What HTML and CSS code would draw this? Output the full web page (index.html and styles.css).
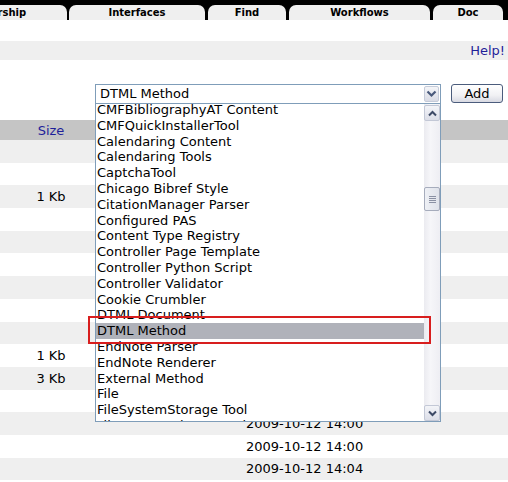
FILE: index.html
```html
<!DOCTYPE html>
<html>
<head>
<meta charset="utf-8">
<link rel="stylesheet" href="styles.css">
</head>
<body>
<div class="tabs">
  <div class="tab tab-own">Ownership</div>
  <div class="tab tab-int">Interfaces</div>
  <div class="tab tab-find">Find</div>
  <div class="tab tab-wf">Workflows</div>
  <div class="tab tab-doc">Doc</div>
</div>
<div class="helpbar"><a class="help" href="#">Help!</a></div>
<div class="addrow">
  <div class="select-wrap">
    <div class="select">
      <span class="select-value">DTML Method</span>
      <span class="select-btn"><svg width="11" height="8" viewBox="0 0 11 8"><polyline points="1.5,1.5 5.5,5.5 9.5,1.5" fill="none" stroke="#4a5a7c" stroke-width="2.2"/></svg></span>
    </div>
    <div class="dropdown">
      <div class="options">
        <div class="opt">CMFBibliographyAT Content</div>
        <div class="opt">CMFQuickInstallerTool</div>
        <div class="opt">Calendaring Content</div>
        <div class="opt">Calendaring Tools</div>
        <div class="opt">CaptchaTool</div>
        <div class="opt">Chicago Bibref Style</div>
        <div class="opt">CitationManager Parser</div>
        <div class="opt">Configured PAS</div>
        <div class="opt">Content Type Registry</div>
        <div class="opt">Controller Page Template</div>
        <div class="opt">Controller Python Script</div>
        <div class="opt">Controller Validator</div>
        <div class="opt">Cookie Crumbler</div>
        <div class="opt">DTML Document</div>
        <div class="opt opt-sel">DTML Method</div>
        <div class="opt">EndNote Parser</div>
        <div class="opt">EndNote Renderer</div>
        <div class="opt">External Method</div>
        <div class="opt">File</div>
        <div class="opt">FileSystemStorage Tool</div>
        <div class="opt">Filesystem Directory View</div>
      </div>
      <div class="scrollbar">
        <div class="sb-btn"><svg width="9" height="7" viewBox="0 0 9 7"><polyline points="1,5.5 4.5,2 8,5.5" fill="none" stroke="#3d4a66" stroke-width="2"/></svg></div>
        <div class="sb-track"><div class="sb-thumb"><span></span><span></span><span></span><span></span></div></div>
        <div class="sb-btn"><svg width="9" height="7" viewBox="0 0 9 7"><polyline points="1,1.5 4.5,5 8,1.5" fill="none" stroke="#3d4a66" stroke-width="2"/></svg></div>
      </div>
    </div>
  </div>
  <button class="add-btn">Add</button>
</div>
<div class="listing">
  <div class="row head"><span class="c-size">Size</span><span class="c-date"></span></div>
  <div class="row alt"><span class="c-size"></span><span class="c-date"></span></div>
  <div class="row"><span class="c-size"></span><span class="c-date"></span></div>
  <div class="row alt"><span class="c-size">1 Kb</span><span class="c-date"></span></div>
  <div class="row"><span class="c-size"></span><span class="c-date"></span></div>
  <div class="row alt"><span class="c-size"></span><span class="c-date"></span></div>
  <div class="row"><span class="c-size"></span><span class="c-date"></span></div>
  <div class="row alt"><span class="c-size"></span><span class="c-date"></span></div>
  <div class="row"><span class="c-size"></span><span class="c-date"></span></div>
  <div class="row alt"><span class="c-size"></span><span class="c-date"></span></div>
  <div class="row"><span class="c-size">1 Kb</span><span class="c-date"></span></div>
  <div class="row alt"><span class="c-size">3 Kb</span><span class="c-date"></span></div>
  <div class="row"><span class="c-size"></span><span class="c-date"></span></div>
  <div class="row alt"><span class="c-size"></span><span class="c-date">2009-10-12 14:00</span></div>
  <div class="row"><span class="c-size"></span><span class="c-date">2009-10-12 14:00</span></div>
  <div class="row alt"><span class="c-size"></span><span class="c-date">2009-10-12 14:04</span></div>
  <div class="row"><span class="c-size"></span><span class="c-date"></span></div>
</div>
<div class="callout"></div>
</body>
</html>
```
FILE: styles.css
```css
html, body {
  margin: 0;
  padding: 0;
  background: #fff;
  width: 508px;
  height: 482px;
  overflow: hidden;
}
body {
  font-family: "DejaVu Sans", Verdana, sans-serif;
  font-size: 13px;
  color: #000;
  position: relative;
}
.tabs {
  display: flex;
  height: 20px;
  padding-top: 5px;
  box-sizing: border-box;
  background: #000;
  gap: 3px;
  overflow: hidden;
}
.tab {
  flex: none;
  height: 15px;
  background: #efefef;
  border-radius: 7px 7px 0 0;
  font-weight: bold;
  font-size: 10px;
  line-height: 16px;
  text-align: center;
  white-space: nowrap;
}
.tab-own { width: 142px; margin-left: -75px; margin-right: -1px; }
.tab-int { width: 136px; }
.tab-find { width: 78px; }
.tab-wf { width: 141px; }
.tab-doc { width: 70px; }

.helpbar {
  margin-top: 21px;
  height: 19px;
  background: #efefef;
  text-align: right;
  padding-right: 3px;
  line-height: 19px;
}
.help {
  color: #1f1f99;
  text-decoration: none;
}

.addrow {
  margin-top: 24px;
  display: flex;
  align-items: flex-start;
  padding-left: 95px;
  gap: 10px;
  height: 20px;
}
.select-wrap {
  position: relative;
  width: 346px;
}
.select {
  height: 20px;
  box-sizing: border-box;
  border: 1px solid #7f9db9;
  background: #fff;
  display: flex;
  align-items: center;
  justify-content: space-between;
  padding-left: 4px;
}
.select-value {
  line-height: 18px;
}
.select-btn {
  width: 15px;
  height: 16px;
  margin-right: 1px;
  border: 1px solid #c5cbd9;
  border-radius: 2px;
  background: linear-gradient(#f4f5f8, #d9dbe5);
  display: flex;
  align-items: center;
  justify-content: center;
  box-sizing: border-box;
}
.dropdown {
  position: absolute;
  left: 0;
  top: 20px;
  width: 346px;
  height: 318px;
  box-sizing: border-box;
  border: 1px solid #7f9db9;
  border-top: none;
  background: #fff;
  display: flex;
  overflow: hidden;
  z-index: 2;
}
.options {
  flex: 1;
  overflow: hidden;
  margin-top: -2px;
}
.opt {
  height: 15.8px;
  line-height: 15.8px;
  padding-left: 1px;
  white-space: nowrap;
}
.opt-sel {
  background: #b0b2ba;
}
.scrollbar {
  width: 16px;
  flex: none;
  display: flex;
  flex-direction: column;
  background: linear-gradient(to right, #ebebf0, #f6f6f9 40%, #eeeef3);
  padding-top: 1px;
}
.sb-btn {
  height: 16px;
  box-sizing: border-box;
  border: 1px solid #c3c8d6;
  border-radius: 2px;
  background: linear-gradient(#f3f4f8, #dcdee8);
  display: flex;
  align-items: center;
  justify-content: center;
}
.sb-track {
  flex: 1;
}
.sb-thumb {
  margin-top: 66px;
  height: 24px;
  box-sizing: border-box;
  border: 1px solid #a6acbc;
  border-radius: 2px;
  background: linear-gradient(to right, #eef0f5, #dfe2ea);
  display: flex;
  flex-direction: column;
  align-items: center;
  justify-content: center;
  gap: 1px;
}
.sb-thumb span {
  display: block;
  width: 7px;
  height: 1px;
  background: #8a90a3;
}
.add-btn {
  width: 52px;
  height: 19px;
  padding: 0;
  margin: 0;
  font-family: "DejaVu Sans", Verdana, sans-serif;
  font-size: 13px;
  color: #000;
  border: 1px solid #4b5c7c;
  border-radius: 3px;
  background: linear-gradient(#ffffff, #f1f1f4 60%, #d8d9e2);
  line-height: 17px;
}

.listing {
  margin-top: 16px;
}
.row {
  display: grid;
  grid-template-columns: 102px 1fr;
  height: 22.7px;
  align-items: center;
}
.row.head {
  height: 20px;
  background: #c5c5c5;
}
.row.head .c-size {
  color: #1f1f99;
}
.row.alt {
  background: #efefef;
}
.c-size {
  text-align: center;
  white-space: nowrap;
}
.c-date {
  padding-left: 144px;
  white-space: nowrap;
}
.callout {
  position: absolute;
  left: 88px;
  top: 316px;
  width: 343px;
  height: 28px;
  box-sizing: border-box;
  border: 2px solid #d81e1e;
  z-index: 3;
}
```
